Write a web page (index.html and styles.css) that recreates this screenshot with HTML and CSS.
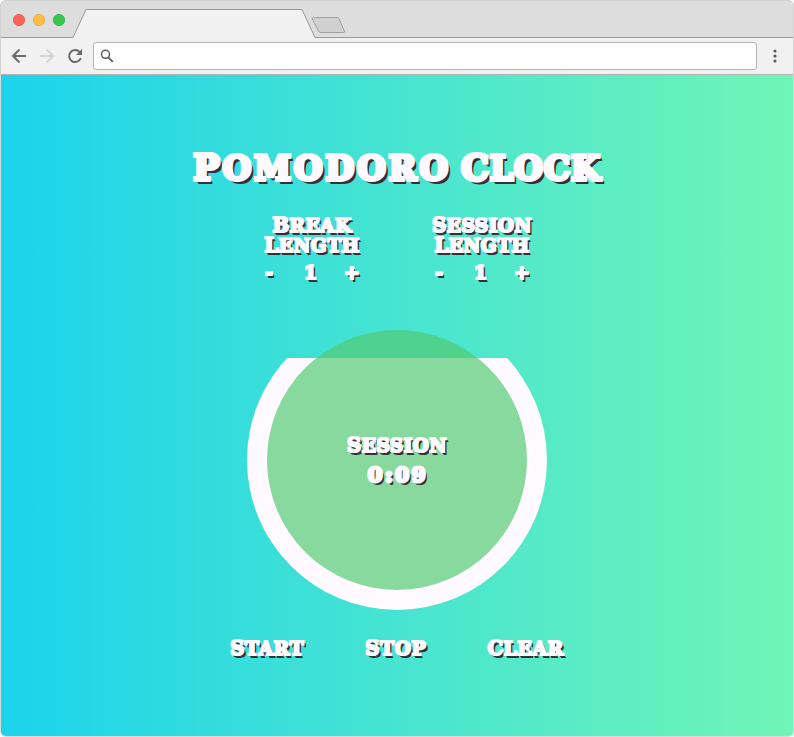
FILE: index.html
```html
<!DOCTYPE html>
<html lang="en">
<head>
<meta charset="utf-8">
<title>Pomodoro Clock</title>
<link rel="stylesheet" href="styles.css">
</head>
<body>
<div class="browser">
  <header class="chrome">
    <svg class="chrome-art" width="794" height="75" viewBox="0 0 794 75">
      <rect width="794" height="75" fill="#ddd"/>
      <path d="M0 37.5H73L86 9.5H302L315 37.5H794V75H0Z" fill="#f1f1f1"/>
      <path d="M0 37.5H73L86 9.5H302L315 37.5H794" fill="none" stroke="#999"/>
      <path d="M313.5 17.500H337Q338.500 17.500 339.200 19L344.300 31Q345 32.500 343.500 32.500H321Q319.200 32.500 318.500 31L312.300 19Q311.700 17.500 313.500 17.500Z" fill="#d0d0d0" stroke="#a0a0a0"/>
      <circle cx="19" cy="20" r="5.600" fill="#fc615c" stroke="#e5504c" stroke-width=".8"/>
      <circle cx="39" cy="20" r="5.600" fill="#fdbe41" stroke="#e3a43a" stroke-width=".8"/>
      <circle cx="59" cy="20" r="5.600" fill="#34c84a" stroke="#28ac3c" stroke-width=".8"/>
      <path d="M26 56H13.500M19.500 49.500L13 56L19.500 62.500" fill="none" stroke="#6a6a6a" stroke-width="2"/>
      <path d="M40 56H52.500M46.500 49.500L53 56L46.500 62.500" fill="none" stroke="#d5d5d5" stroke-width="2"/>
      <path d="M79.600 52A6 6 0 1 0 80.800 58" fill="none" stroke="#6a6a6a" stroke-width="2"/>
      <path d="M82 49V55H76Z" fill="#6a6a6a"/>
      <rect x="93.500" y="42.500" width="663" height="27" rx="2.500" fill="#fff" stroke="#b3b3b3"/>
      <circle cx="105.500" cy="54.300" r="4" fill="none" stroke="#5c5c5c" stroke-width="1.500"/>
      <path d="M108.300 57.300L112.800 61.800" stroke="#5c5c5c" stroke-width="1.800"/>
      <g fill="#5a5a5a"><circle cx="775" cy="51" r="1.600"/><circle cx="775" cy="56" r="1.600"/><circle cx="775" cy="61" r="1.600"/></g>
      <path d="M0 74.500H794" stroke="#b3b3b3"/>
      <path d="M.5 75V6Q.5 .5 6 .5H788Q793.500 .5 793.500 6V75" fill="none" stroke="#d2d2d2"/>
    </svg>
  </header>
  <main class="app">
    <h1 class="title"><span class="word pomodoro">Pomodoro</span><span class="word clock">Clock</span></h1>
    <section class="settings">
      <div class="setting">
        <h2 class="label"><span class="word">Break</span><span class="word">Length</span></h2>
        <div class="stepper"><span>-</span><span class="value">1</span><span>+</span></div>
      </div>
      <div class="setting">
        <h2 class="label"><span class="word">Session</span><span class="word">Length</span></h2>
        <div class="stepper"><span>-</span><span class="value">1</span><span>+</span></div>
      </div>
    </section>
    <section class="timer">
      <div class="face"><span class="word">Session</span><span class="word time">0:09</span></div>
    </section>
    <nav class="actions"><span class="word">Start</span><span class="word">Stop</span><span class="word">Clear</span></nav>
  </main>
</div>
</body>
</html>
```
FILE: styles.css
```css
* { box-sizing: border-box; }
body { margin: 0; background: #fff; }
.browser {
  width: 794px;
  height: 737px;
  overflow: hidden;
  border-radius: 6px;
  background: #d5dcda;
}
.chrome, .chrome-art { display: block; height: 75px; }
.app {
  display: flex;
  flex-direction: column;
  align-items: center;
  height: 661px;
  margin: 0 1px;
  padding-top: 73px;
  border-radius: 0 0 5px 5px;
  background: linear-gradient(to right, #1cd3ec, #70f5b6);
  color: #fffaff;
  font: bold 18.5px/20px "DejaVu Serif", serif;
  letter-spacing: .5px;
  -webkit-text-stroke: 2.2px #fffaff;
  text-shadow: 2px 2px 0 #333038, 2.500px 2.500px 0 #333038;
}
.word {
  display: inline-block;
  text-transform: uppercase;
  white-space: nowrap;
}
.word::first-letter { font-size: 1.06em; }
h1, h2 { margin: 0; font: inherit; }
.title {
  display: flex;
  gap: 10px;
  height: 40px;
  font-size: 33px;
  line-height: 40px;
  -webkit-text-stroke-width: 4px;
  text-shadow: 2px 2px 0 #333038, 3px 3px 0 #333038, 3.500px 3.500px 0 #333038;
}
.pomodoro { letter-spacing: 3px; }
.clock { letter-spacing: 1px; }
.settings {
  display: flex;
  gap: 70px;
  margin-top: 28px;
}
.setting { width: 100px; }
.label {
  display: flex;
  flex-direction: column;
  align-items: center;
  height: 40px;
}
.label .word { height: 20px; }
.stepper {
  display: flex;
  justify-content: space-between;
  margin-top: 7px;
  padding: 0 2px 0 3px;
}
.value { padding-left: 4px; }
.timer {
  width: 300px;
  height: 300px;
  margin-top: 27px;
  padding: 20px;
  border-radius: 50%;
  background: linear-gradient(transparent 48px, #fffaff 48px);
}
.face {
  display: flex;
  flex-direction: column;
  align-items: center;
  gap: 9px;
  height: 260px;
  padding-top: 106px;
  border-radius: 50%;
  background: rgba(83, 201, 115, .69);
}
.face .word { height: 20px; }
.time {
  padding-left: 2px;
  font-size: 20px;
  letter-spacing: 2.5px;
  -webkit-text-stroke-width: 3px;
}
.actions {
  display: flex;
  gap: 61px;
  margin-top: 29px;
  letter-spacing: .8px;
}
```
